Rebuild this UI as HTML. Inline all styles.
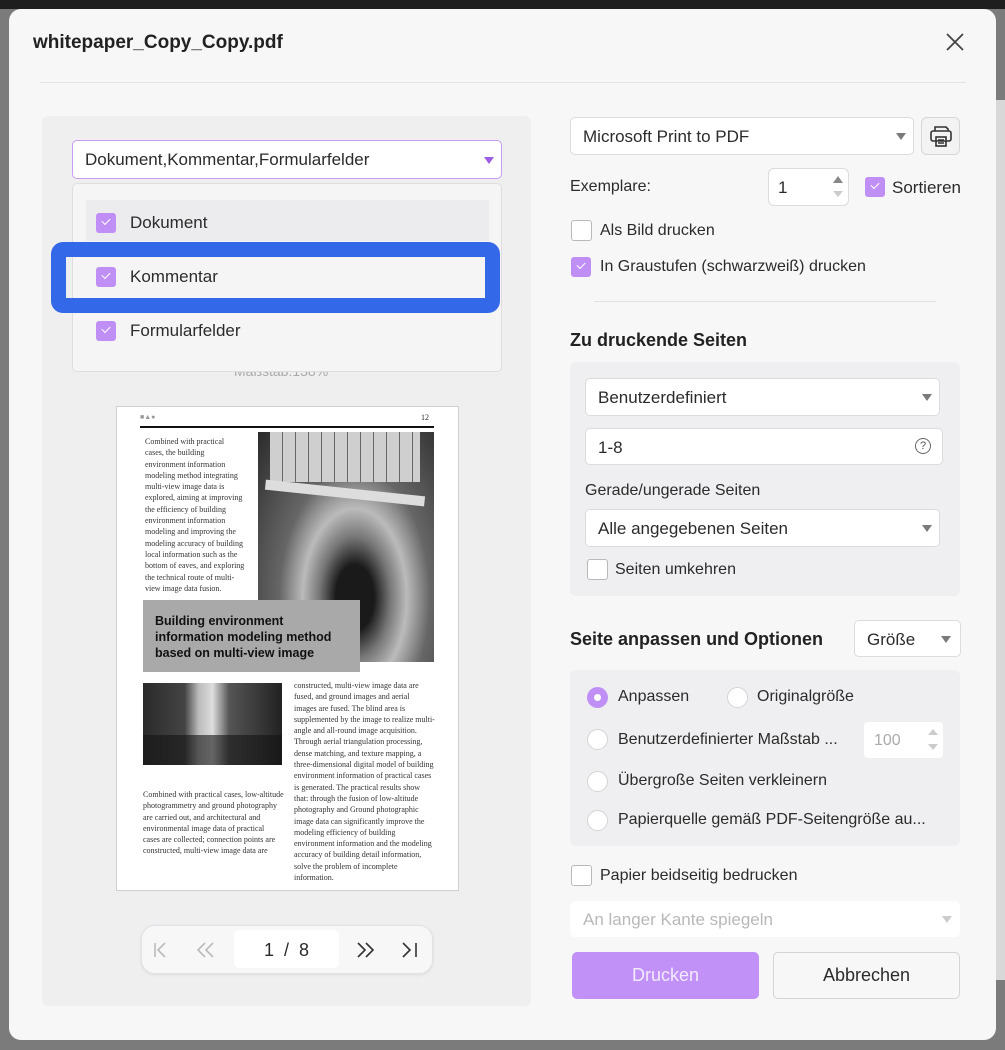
<!DOCTYPE html>
<html><head><meta charset="utf-8"><style>
*{box-sizing:border-box;margin:0;padding:0}
body{width:1005px;height:1050px;overflow:hidden;background:#7b7b7b;font-family:"Liberation Sans","Noto Sans CJK SC",sans-serif;color:#2b2b2b;position:relative}
.a{position:absolute}
.t{font-size:17px;white-space:nowrap}
.cb{position:absolute;width:20px;height:20px;border-radius:3px;background:#c08ff5}
.cb::after{content:"";position:absolute;left:6px;top:5px;width:7px;height:4px;border-left:1.5px solid #fff;border-bottom:1.5px solid #fff;transform:rotate(-45deg)}
.ucb{position:absolute;width:21px;height:21px;border-radius:3px;border:1.5px solid #b9b9bc;background:#fff}
.sel{position:absolute;background:#fff;border:1px solid #dcdcde;border-radius:5px}
.arr{position:absolute;width:0;height:0;border-left:5px solid transparent;border-right:5px solid transparent;border-top:7px solid #7a7a7a}
.rad{position:absolute;width:21px;height:21px;border-radius:50%;border:1.5px solid #d4d4d6;background:#fff}
.pt{font-family:"Liberation Serif",serif;font-size:8px;line-height:11.3px;color:#333;position:absolute;white-space:nowrap}
</style></head><body>
<div class="a" style="left:0;top:0;width:1005px;height:9px;background:#1e1e1e"></div>
<div class="a" style="left:996px;top:100px;width:9px;height:880px;background:#d8d8d8"></div>
<div class="a" style="left:9px;top:9px;width:987px;height:1031px;background:#f7f7f8;border-radius:12px"></div>

<div class="a" style="left:33px;top:32px;font-size:19px;font-weight:bold;color:#222">whitepaper_Copy_Copy.pdf</div>
<svg class="a" style="left:945px;top:32px" width="20" height="20"><path d="M2 2L18 18M18 2L2 18" stroke="#444" stroke-width="1.8"/></svg>
<div class="a" style="left:40px;top:82px;width:926px;height:1px;background:#e4e4e6"></div>

<!-- left panel -->
<div class="a" style="left:42px;top:116px;width:489px;height:890px;background:#efeff0;border-radius:6px"></div>
<div class="a" style="left:234px;top:363px;font-size:14px;color:#aaa">Maßstab:138%</div>
<div class="a" style="left:72px;top:140px;width:430px;height:39px;background:#fff;border:1.5px solid #c79cf2;border-radius:5px"></div>
<div class="a t" style="left:85px;top:150px">Dokument,Kommentar,Formularfelder</div>
<div class="arr" style="left:484px;top:157px;border-top-color:#9b5de5"></div>
<div class="a" style="left:72px;top:183px;width:430px;height:189px;background:#f5f5f6;border:1px solid #dedee0;border-radius:5px"></div>
<div class="a" style="left:86px;top:200px;width:403px;height:41px;background:#ececee"></div>
<div class="cb" style="left:96px;top:213px"></div><div class="a t" style="left:130px;top:213px">Dokument</div>
<div class="cb" style="left:96px;top:267px"></div><div class="a t" style="left:130px;top:267px">Kommentar</div>
<div class="cb" style="left:96px;top:321px"></div><div class="a t" style="left:130px;top:321px">Formularfelder</div>
<div class="a" style="left:51px;top:242px;width:449px;height:71px;border:15px solid #3369e8;border-radius:12px"></div>

<!-- page -->
<div class="a" style="left:116px;top:406px;width:343px;height:485px;background:#fff;border:1px solid #d0d0d0"></div>
<div class="a" style="left:140px;top:414px;font-size:7px;color:#999">■▲●</div>
<div class="a" style="left:421px;top:413px;font-size:8px;font-family:'Liberation Serif',serif">12</div>
<div class="a" style="left:140px;top:426px;width:294px;height:1.5px;background:#111"></div>
<div class="pt" style="left:145px;top:436px">Combined with practical<br>cases, the building<br>environment information<br>modeling method integrating<br>multi-view image data is<br>explored, aiming at improving<br>the efficiency of building<br>environment information<br>modeling and improving the<br>modeling accuracy of building<br>local information such as the<br>bottom of eaves, and exploring<br>the technical route of multi-<br>view image data fusion.</div>
<div class="a" style="left:258px;top:432px;width:176px;height:230px;background:radial-gradient(ellipse at 55% 72%,#1a1a1a 0 14%,#777 26%,#bbb 38%,#666 55%,#2a2a2a 100%)"></div>
<div class="a" style="left:270px;top:432px;width:150px;height:50px;background:repeating-linear-gradient(90deg,#cfcfcf 0 12px,#666 12px 13px)"></div>
<div class="a" style="left:265px;top:488px;width:160px;height:10px;background:#ddd;transform:rotate(6deg)"></div>
<div class="a" style="left:143px;top:600px;width:217px;height:72px;background:#a9a9a9"></div>
<div class="a" style="left:155px;top:613px;font-size:12.5px;font-weight:bold;line-height:16px;color:#111;white-space:nowrap">Building environment<br>information modeling method<br>based on multi-view image</div>
<div class="a" style="left:143px;top:683px;width:139px;height:82px;background:linear-gradient(90deg,#2a2a2a 0,#444 30%,#bbb 40%,#ddd 50%,#555 62%,#222 100%)"></div>
<div class="a" style="left:143px;top:735px;width:139px;height:30px;background:rgba(20,20,20,.6)"></div>
<div class="pt" style="left:143px;top:789px">Combined with practical cases, low-altitude<br>photogrammetry and ground photography<br>are carried out, and architectural and<br>environmental image data of practical<br>cases are collected; connection points are<br>constructed, multi-view image data are</div>
<div class="pt" style="left:294px;top:680px">constructed, multi-view image data are<br>fused, and ground images and aerial<br>images are fused. The blind area is<br>supplemented by the image to realize multi-<br>angle and all-round image acquisition.<br>Through aerial triangulation processing,<br>dense matching, and texture mapping, a<br>three-dimensional digital model of building<br>environment information of practical cases<br>is generated. The practical results show<br>that: through the fusion of low-altitude<br>photography and Ground photographic<br>image data can significantly improve the<br>modeling efficiency of building<br>environment information and the modeling<br>accuracy of building detail information,<br>solve the problem of incomplete<br>information.</div>

<!-- nav -->
<div class="a" style="left:141px;top:925px;width:292px;height:49px;background:#f7f7f8;border:1px solid #e2e2e4;border-radius:14px;box-shadow:0 1px 3px rgba(0,0,0,.08)"></div>
<div class="a" style="left:234px;top:930px;width:105px;height:38px;background:#fff;border-radius:6px"></div>
<svg class="a" style="left:150px;top:939px" width="280" height="22" fill="none" stroke-width="1.6">
<path d="M5 4v14M15 4l-7 7 7 7" stroke="#bbb"/>
<path d="M55 4l-7 7 7 7M63 4l-7 7 7 7" stroke="#bbb"/>
<path d="M208 4l7 7-7 7M216 4l7 7-7 7" stroke="#333"/>
<path d="M253 4l7 7-7 7M266 4v14" stroke="#333"/>
</svg>
<div class="a t" style="left:264px;top:940px;font-size:18px">1&nbsp;&nbsp;/&nbsp;&nbsp;8</div>

<!-- right -->
<div class="sel" style="left:570px;top:117px;width:344px;height:38px"></div>
<div class="a t" style="left:583px;top:127px">Microsoft Print to PDF</div>
<div class="arr" style="left:896px;top:133px"></div>
<div class="a" style="left:921px;top:117px;width:39px;height:38px;border:1px solid #d6d6d8;border-radius:6px;background:#f3f3f4"></div>
<svg class="a" style="left:928px;top:123px" width="26" height="26" viewBox="0 0 26 26" fill="none" stroke="#333" stroke-width="1.6"><path d="M7 8V4h11l2 2v2"/><rect x="3" y="8" width="20" height="10" rx="2"/><rect x="8" y="14" width="10" height="9"/><path d="M10 17h6M10 20h6"/></svg>
<div class="a t" style="left:570px;top:178px;font-size:16px">Exemplare:</div>
<div class="a" style="left:768px;top:168px;width:81px;height:38px;background:#fff;border:1px solid #dcdcde;border-radius:6px"></div>
<div class="a t" style="left:778px;top:178px">1</div>
<div class="a" style="left:833px;top:176px;border-left:5px solid transparent;border-right:5px solid transparent;border-bottom:7px solid #888"></div>
<div class="a" style="left:833px;top:191px;border-left:5px solid transparent;border-right:5px solid transparent;border-top:6px solid #ccc"></div>
<div class="cb" style="left:865px;top:177px"></div><div class="a t" style="left:892px;top:178px">Sortieren</div>
<div class="ucb" style="left:571px;top:220px"></div><div class="a t" style="left:600px;top:222px;font-size:16px">Als Bild drucken</div>
<div class="cb" style="left:571px;top:257px"></div><div class="a t" style="left:600px;top:258px;font-size:16px">In Graustufen (schwarzweiß) drucken</div>
<div class="a" style="left:594px;top:301px;width:342px;height:1px;background:#e2e2e4"></div>
<div class="a" style="left:570px;top:330px;font-size:18px;font-weight:bold;color:#222">Zu druckende Seiten</div>
<div class="a" style="left:570px;top:362px;width:390px;height:234px;background:#efeff1;border-radius:6px"></div>
<div class="sel" style="left:585px;top:378px;width:355px;height:38px"></div>
<div class="a t" style="left:598px;top:388px">Benutzerdefiniert</div>
<div class="arr" style="left:922px;top:394px"></div>
<div class="sel" style="left:585px;top:428px;width:358px;height:37px"></div>
<div class="a t" style="left:598px;top:438px">1-8</div>
<div class="a" style="left:915px;top:438px;width:16px;height:16px;border:1.3px solid #666;border-radius:50%;font-size:11px;text-align:center;line-height:14px;color:#555">?</div>
<div class="a t" style="left:585px;top:482px;font-size:16px">Gerade/ungerade Seiten</div>
<div class="sel" style="left:585px;top:509px;width:355px;height:38px"></div>
<div class="a t" style="left:598px;top:519px">Alle angegebenen Seiten</div>
<div class="arr" style="left:922px;top:525px"></div>
<div class="ucb" style="left:587px;top:559px"></div><div class="a t" style="left:615px;top:561px;font-size:16px">Seiten umkehren</div>

<div class="a" style="left:570px;top:629px;font-size:18px;font-weight:bold;color:#222">Seite anpassen und Optionen</div>
<div class="sel" style="left:854px;top:620px;width:107px;height:37px"></div>
<div class="a t" style="left:867px;top:630px">Größe</div>
<div class="arr" style="left:941px;top:636px"></div>
<div class="a" style="left:570px;top:670px;width:390px;height:176px;background:#efeff1;border-radius:6px"></div>
<div class="a" style="left:587px;top:687px;width:21px;height:21px;border-radius:50%;background:#c08ff5"></div>
<div class="a" style="left:594px;top:694px;width:7px;height:7px;border-radius:50%;background:#fff"></div>
<div class="a t" style="left:618px;top:688px;font-size:16px">Anpassen</div>
<div class="rad" style="left:727px;top:687px"></div><div class="a t" style="left:757px;top:688px;font-size:16px">Originalgröße</div>
<div class="rad" style="left:587px;top:729px"></div><div class="a t" style="left:618px;top:731px;font-size:16px">Benutzerdefinierter Maßstab ...</div>
<div class="a" style="left:864px;top:722px;width:79px;height:36px;background:#fff;border-radius:4px"></div>
<div class="a t" style="left:874px;top:732px;color:#aaa;font-size:16px">100</div>
<div class="a" style="left:928px;top:729px;border-left:5px solid transparent;border-right:5px solid transparent;border-bottom:6px solid #ccc"></div>
<div class="a" style="left:928px;top:744px;border-left:5px solid transparent;border-right:5px solid transparent;border-top:6px solid #ccc"></div>
<div class="rad" style="left:587px;top:771px"></div><div class="a t" style="left:618px;top:772px;font-size:16px">Übergroße Seiten verkleinern</div>
<div class="rad" style="left:587px;top:810px"></div><div class="a t" style="left:618px;top:811px;font-size:16px">Papierquelle gemäß PDF-Seitengröße au...</div>

<div class="ucb" style="left:571px;top:865px"></div><div class="a t" style="left:600px;top:867px;font-size:16px">Papier beidseitig bedrucken</div>
<div class="a" style="left:570px;top:901px;width:390px;height:36px;background:#fff;border-radius:5px"></div>
<div class="a t" style="left:583px;top:910px;color:#b8b8b8">An langer Kante spiegeln</div>
<div class="arr" style="left:942px;top:916px;border-top-color:#ccc"></div>
<div class="a" style="left:572px;top:952px;width:187px;height:47px;background:#c191f8;border-radius:5px;color:#f3eaff;font-size:18px;text-align:center;line-height:47px">Drucken</div>
<div class="a" style="left:773px;top:952px;width:187px;height:47px;background:#f7f7f8;border:1px solid #d4d4d6;border-radius:5px;font-size:18px;text-align:center;line-height:45px">Abbrechen</div>
</body></html>
